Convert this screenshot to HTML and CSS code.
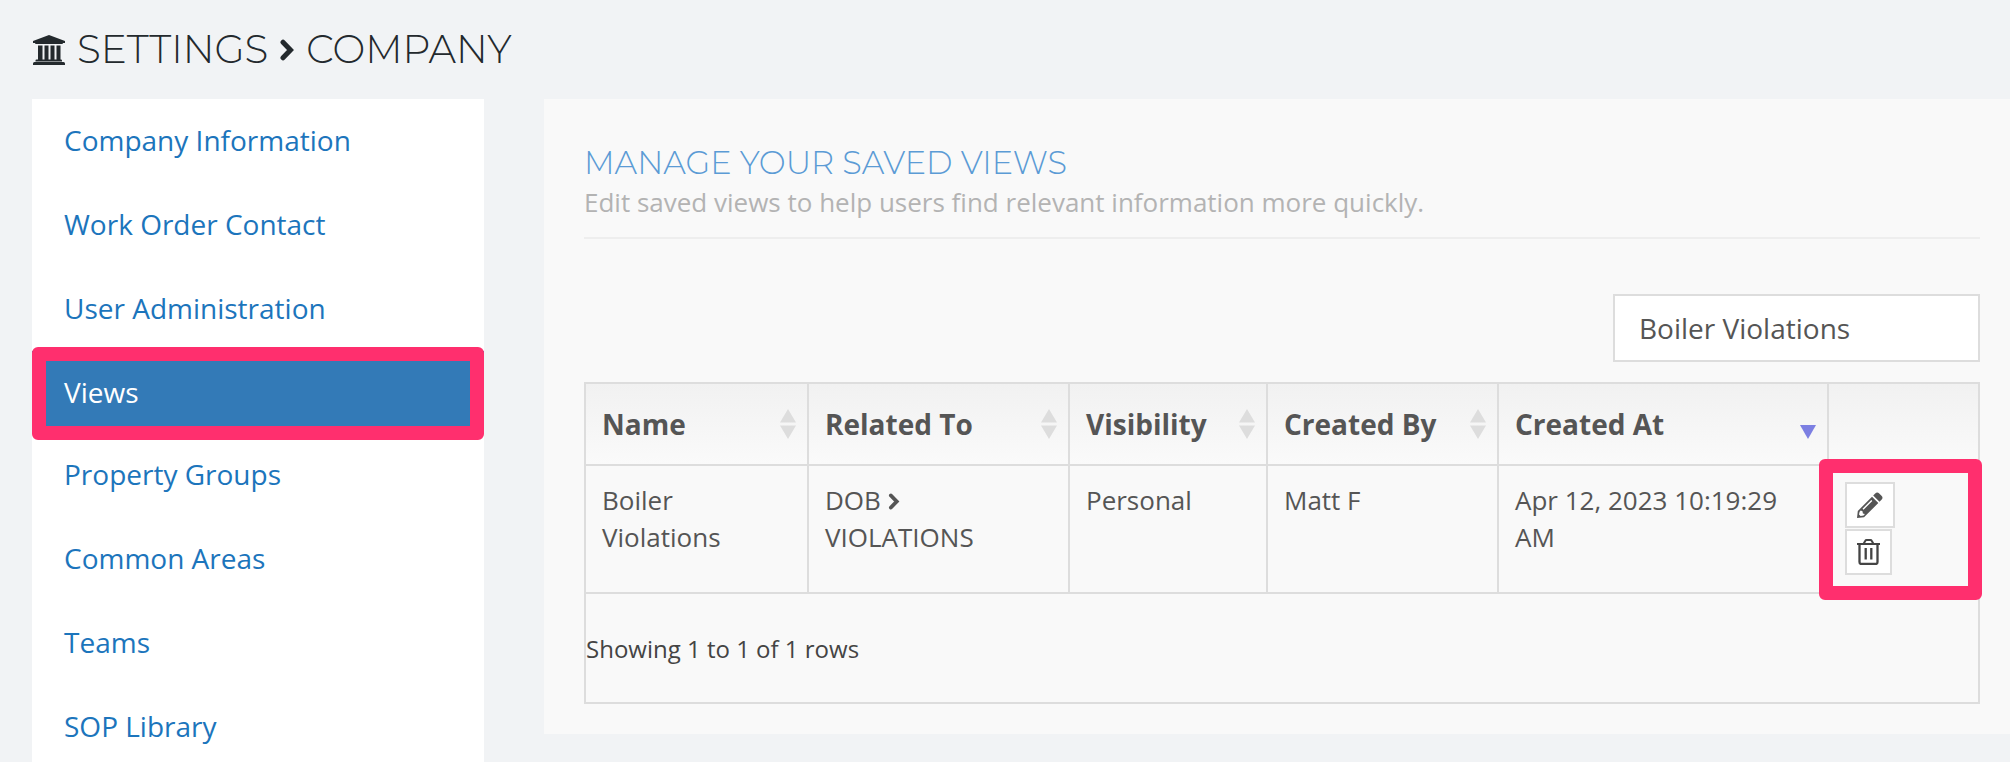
FILE: index.html
```html
<!DOCTYPE html>
<html lang="en">
<head>
<meta charset="utf-8">
<title>Settings - Company</title>
<link rel="stylesheet" href="styles.css">
</head>
<body>
<svg class="defs" aria-hidden="true">
  <symbol id="chevron" viewBox="0 0 14 22"><path d="M3 3.200 L10.500 11 L3 18.800" fill="none" stroke="currentColor" stroke-width="5" stroke-linecap="round" stroke-linejoin="miter"/></symbol>
  <symbol id="sort" viewBox="0 0 16 30"><path d="M8 0 16 13.500H0z M0 16.500H16L8 30z" fill="#dddddd"/></symbol>
  <symbol id="sort-desc" viewBox="0 0 16 30"><path d="M0 16H16L8 30z" fill="#7c7fe2"/></symbol>
</svg>
<header class="page-head">
  <h1 class="page-title">
    <svg class="bank" viewBox="0 0 32 30" aria-hidden="true"><path fill="currentColor" d="M16 0 32 6v2h-2q0 1-1 1H3q-1 0-1-1H0V6zM5 10.500h4.500v14h2v-14h4v14h2v-14h4v14h2v-14h4v14h.5q1 0 1 1v1H2.500v-1q0-1 1-1H5zM1.500 27h29q1.500 0 1.500 1.500V30H0v-1.500Q0 27 1.500 27z"/></svg>
    <span>Settings</span>
    <svg class="crumb" aria-hidden="true"><use href="#chevron"/></svg>
    <span>Company</span>
  </h1>
</header>
<div class="layout">
  <nav class="sidebar" aria-label="Company settings">
    <ul class="menu">
      <li class="item"><a class="link" href="#info">Company Information</a></li>
      <li class="item"><a class="link" href="#contact">Work Order Contact</a></li>
      <li class="item"><a class="link" href="#users">User Administration</a></li>
      <li class="item active"><a class="link" href="#views" aria-current="page">Views</a></li>
      <li class="item"><a class="link" href="#groups">Property Groups</a></li>
      <li class="item"><a class="link" href="#areas">Common Areas</a></li>
      <li class="item"><a class="link" href="#teams">Teams</a></li>
      <li class="item"><a class="link" href="#sop">SOP Library</a></li>
    </ul>
  </nav>
  <main class="panel">
    <div class="panel-head">
      <h2 class="panel-title">Manage your saved views</h2>
      <p class="panel-note">Edit saved views to help users find relevant information more quickly.</p>
    </div>
    <div class="search"><input class="search-box" type="text" value="Boiler Violations" aria-label="Search views"></div>
    <table class="views">
      <colgroup><col class="c-name"><col class="c-related"><col class="c-visibility"><col class="c-by"><col class="c-at"><col></colgroup>
      <thead>
        <tr>
          <th><button class="sort" type="button">Name<svg class="sort-icon" aria-hidden="true"><use href="#sort"/></svg></button></th>
          <th><button class="sort" type="button">Related To<svg class="sort-icon" aria-hidden="true"><use href="#sort"/></svg></button></th>
          <th><button class="sort" type="button">Visibility<svg class="sort-icon" aria-hidden="true"><use href="#sort"/></svg></button></th>
          <th><button class="sort" type="button">Created By<svg class="sort-icon" aria-hidden="true"><use href="#sort"/></svg></button></th>
          <th aria-sort="descending"><button class="sort" type="button">Created At<svg class="sort-icon" aria-hidden="true"><use href="#sort-desc"/></svg></button></th>
          <th></th>
        </tr>
      </thead>
      <tbody>
        <tr>
          <td>Boiler Violations</td>
          <td>DOB <svg class="path-arrow" aria-hidden="true"><use href="#chevron"/></svg> VIOLATIONS</td>
          <td>Personal</td>
          <td>Matt F</td>
          <td>Apr 12, 2023 10:19:29 AM</td>
          <td class="actions">
            <div class="action-list">
              <button class="action" type="button" aria-label="Edit"><svg class="pencil" viewBox="0 0 26 26" aria-hidden="true"><path fill="#555" d="M18.200 1.500q2-2 4 0l2.300 2.300q2 2 0 4l-2 2-6.300-6.300z"/><path fill="#555" fill-rule="evenodd" d="M15 4.700 21.300 11 7 25.300 0 26l.8-7zM14.300 8 5.500 16.800l1 1L15.300 9zM2.600 19.700 2 22.400 3.600 24l3-.6 1.300-1.500-2-.5-.4-2.100-1.700-.7z"/></svg></button>
              <button class="action" type="button" aria-label="Delete"><svg class="trash" viewBox="0 0 23 26" aria-hidden="true"><g fill="none" stroke="#444" stroke-width="2"><path d="M0 5h23M6.500 5 8.300 1.800Q8.700 1 9.600 1h3.800q.9 0 1.300.8L16.500 5"/><path d="M2.500 5v18q0 2 2 2h14q2 0 2-2V5M8.700 9v11.500M14.300 9v11.500" stroke-width="2.300"/></g></svg></button>
            </div>
          </td>
        </tr>
      </tbody>
      <tfoot>
        <tr><td class="summary" colspan="6">Showing 1 to 1 of 1 rows</td></tr>
      </tfoot>
    </table>
  </main>
</div>
</body>
</html>
```
FILE: styles.css
```css
* { box-sizing: border-box; }
body {
  margin: 0;
  min-height: 100vh;
  overflow: hidden;
  background: #f1f3f5;
  color: #555;
  font: 26px/37px "Open Sans", sans-serif;
}
.defs { position: absolute; width: 0; height: 0; }
.page-head { padding: 24px 33px 23px; }
.page-title {
  display: flex;
  align-items: center;
  gap: 12px;
  margin: 0;
  color: #23292d;
  font: 300 39px/51px Montserrat, Inter, sans-serif;
  text-transform: uppercase;
}
.page-head { padding-bottom: 24px; }
.bank { width: 32px; height: 30px; }
.crumb { width: 14px; height: 22px; }

.layout { display: flex; align-items: flex-start; gap: 60px; padding-left: 32px; height: calc(100vh - 99px); }
.sidebar { flex: 0 0 452px; align-self: stretch; overflow: hidden; background: #fff; }
.menu { display: flex; flex-direction: column; gap: 2px; margin: 0; padding: 0; list-style: none; }
.item { position: relative; flex: none; }
.link {
  display: block;
  padding: 21px 32px;
  color: #1c75bc;
  font-size: 28px;
  line-height: 40px;
  text-decoration: none;
}
.active { margin-bottom: -2px; }
.active .link { background: #337ab7; color: #fff; }
.active::after {
  content: "";
  position: absolute;
  inset: -4px 0 -7px;
  border: 14px solid #ff2f6e;
  border-radius: 6px;
  pointer-events: none;
}

.panel { flex: 1; min-width: 0; padding: 42px 30px 30px 40px; background: #f9f9f9; }
.panel-head { border-bottom: 2px solid #eee; padding-bottom: 16px; }
.panel-title {
  margin: 0;
  color: #5b9bd5;
  font: 300 32px/43px Montserrat, Inter, sans-serif;
  text-transform: uppercase;
}
.panel-note { margin: 0; color: #b3b3b3; }
.search { display: flex; justify-content: flex-end; padding: 55px 0 20px; }
.search-box {
  width: 367px;
  height: 68px;
  border: 2px solid #ddd;
  padding: 0 24px;
  background: #fff;
  color: #555;
  font: 28px/40px "Open Sans", sans-serif;
}

.views { width: 100%; border-collapse: collapse; table-layout: fixed; border: 2px solid #ddd; }
.c-name { width: 223px; }
.c-related { width: 261px; }
.c-visibility { width: 198px; }
.c-by { width: 231px; }
.c-at { width: 330px; }
.views th { height: 82px; border: 2px solid #ddd; padding: 0; background: linear-gradient(#f1f1f1, #fafafa); }
.sort {
  display: flex;
  align-items: center;
  justify-content: space-between;
  width: 100%;
  border: 0;
  padding: 0 11px 0 16px;
  background: none;
  color: #555;
  font: 700 28px/40px "Open Sans", sans-serif;
}
.sort-icon { width: 16px; height: 30px; }
.views td { height: 128px; border: 2px solid #ddd; padding: 16px; vertical-align: top; }
.path-arrow { width: 12px; height: 17px; }
.views .actions { position: relative; }
.actions::after {
  content: "";
  position: absolute;
  inset: -7px -4px -8px -10px;
  border: 14px solid #ff2f6e;
  border-radius: 6px;
  pointer-events: none;
}
.action-list { display: flex; flex-direction: column; align-items: flex-start; gap: 1px; }
.action { display: flex; align-items: center; border: 2px solid #ddd; padding: 8px 10px; height: 46px; background: #fff; }
.pencil { width: 26px; height: 26px; }
.trash { width: 23px; height: 26px; }
.views .summary { height: 110px; padding: 0; vertical-align: middle; color: #444; font-size: 24px; }
```
